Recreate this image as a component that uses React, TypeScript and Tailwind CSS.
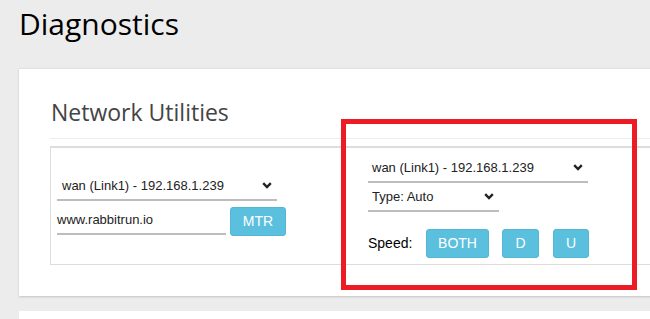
import { ReactNode } from 'react';

function Chevron() {
  return (
    <svg width="10" height="7" viewBox="0 0 10 7" className="shrink-0">
      <polyline points="1.2,1.2 5,5 8.8,1.2" fill="none" stroke="#222" strokeWidth="2.4" />
    </svg>
  );
}

function Select({ label, width }: { label: string; width: string }) {
  return (
    <div className={`flex h-[29px] items-center justify-between border-b-2 border-[#bdbdbd] pr-[5px] ${width}`}>
      <span className="text-[13px] text-[#222]">{label}</span>
      <Chevron />
    </div>
  );
}

function InfoButton({ children, width }: { children: ReactNode; width: string }) {
  return (
    <button
      className={`flex h-[29px] items-center justify-center rounded-[3px] border border-[#53b6d4] bg-[#5bc0de] text-[14px] text-white ${width}`}
    >
      {children}
    </button>
  );
}

export default function App() {
  return (
    <div
      className="relative h-[319px] w-[650px] overflow-hidden bg-[#ececec]"
      style={{ fontFamily: '"Liberation Sans", Arial, sans-serif' }}
    >
      {/* Page title */}
      <h1
        className="pl-[19px] pt-[2px] text-[30px] leading-[44px] text-black"
        style={{ fontFamily: '"Open Sans", "Noto Sans", sans-serif' }}
      >
        Diagnostics
      </h1>

      {/* Card */}
      <div className="ml-[19px] mt-[22px] w-[720px] border-t border-[#e2e2e2] bg-white px-[31px] pb-[31px] shadow-[0_1px_2px_rgba(0,0,0,0.18)]">
        <h2
          className="border-b border-[#ececec] pb-[8px] pl-[1px] pt-[26px] text-[23px] leading-[35px] text-[#444]"
          style={{ fontFamily: '"Open Sans", "Noto Sans", sans-serif' }}
        >
          Network Utilities
        </h2>

        <div className="mt-[7px] grid h-[119px] grid-cols-[317px_1fr] items-start border border-t-2 border-[#dddddd]">
          {/* MTR */}
          <div className="flex flex-col gap-[6px] pl-[6px] pt-[24px]">
            <Select label="wan (Link1) - 192.168.1.239" width="w-[220px] pl-[5px]" />
            <div className="flex items-end gap-[4px]">
              <div className="flex h-[28px] w-[169px] items-center border-b-2 border-[#bdbdbd] text-[13px] text-[#222]">
                www.rabbitrun.io
              </div>
              <InfoButton width="w-[56px] mb-[-1px]">MTR</InfoButton>
            </div>
          </div>

          {/* Speed test */}
          <div className="flex flex-col pt-[6px]">
            <Select label="wan (Link1) - 192.168.1.239" width="w-[220px] pl-[4px]" />
            <Select label="Type: Auto" width="w-[131px] pl-[4px]" />
            <div className="mt-[17px] flex items-center">
              <span className="mr-[16px] w-[42px] text-[14px] text-black">Speed:</span>
              <InfoButton width="w-[63px]">BOTH</InfoButton>
              <div className="w-[13px]" />
              <InfoButton width="w-[37px]">D</InfoButton>
              <div className="w-[14px]" />
              <InfoButton width="w-[36px]">U</InfoButton>
            </div>
          </div>
        </div>
      </div>

      {/* Next card */}
      <div className="ml-[19px] mt-[15px] h-[40px] w-[720px] bg-white" />

      {/* Annotation highlight */}
      <div className="absolute left-[341px] top-[119px] h-[171px] w-[296px] border-[5px] border-[#ed1c24]" />
    </div>
  );
}
